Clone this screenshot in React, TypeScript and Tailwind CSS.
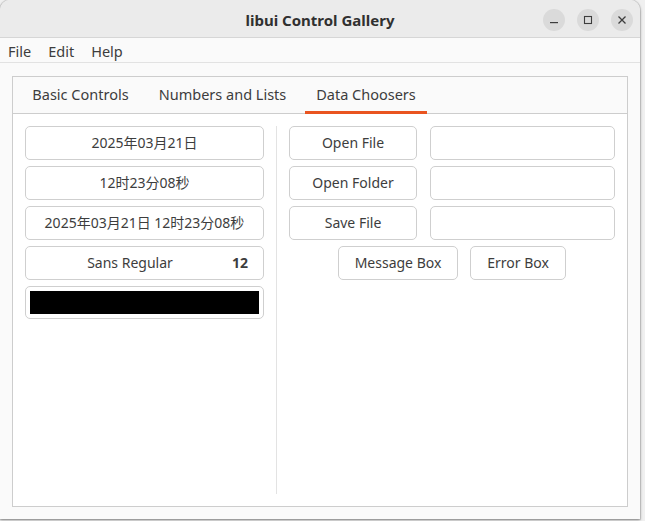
import React from "react";

const font = { fontFamily: '"Noto Sans", "Noto Sans CJK SC", sans-serif' };

function Btn({ children, className = "" }: { children: React.ReactNode; className?: string }) {
  return (
    <div
      className={
        "flex h-[34px] items-center justify-center rounded-[5px] border border-[#cfcfcf] bg-white pb-[1px] text-[14px] text-[#3d3d3d] " +
        className
      }
    >
      {children}
    </div>
  );
}

function Entry() {
  return <div className="h-[34px] flex-1 rounded-[5px] border border-[#cfcfcf] bg-white" />;
}

export default function App() {
  return (
    <div className="h-[521px] w-[645px] overflow-hidden bg-[#f0f0f0]" style={font}>
      <div className="flex h-[519px] w-[640px] flex-col overflow-hidden rounded-t-[10px] bg-[#fafafa] shadow-[0_1px_3px_rgba(0,0,0,0.45),0_0_0_1px_rgba(0,0,0,0.08)]">
        {/* Header bar */}
        <div className="relative flex h-[38px] shrink-0 items-center border-b border-[#d6d6d6] bg-[#ebebeb] pt-[4px]">
          <div className="flex-1 text-center text-[15px] font-bold text-[#303030]">libui Control Gallery</div>
          <div className="absolute right-[7px] top-[9px] flex gap-[12px]">
            <div className="flex h-[22px] w-[22px] items-center justify-center rounded-full bg-[#dadada]">
              <svg width="10" height="10" viewBox="0 0 10 10">
                <rect x="1" y="7" width="8" height="1.2" fill="#3d3d3d" />
              </svg>
            </div>
            <div className="flex h-[22px] w-[22px] items-center justify-center rounded-full bg-[#dadada]">
              <svg width="10" height="10" viewBox="0 0 10 10">
                <rect x="1.5" y="1.5" width="7" height="7" fill="none" stroke="#3d3d3d" strokeWidth="1.1" />
              </svg>
            </div>
            <div className="flex h-[22px] w-[22px] items-center justify-center rounded-full bg-[#dadada]">
              <svg width="10" height="10" viewBox="0 0 10 10">
                <path d="M1.5 1.5 L8.5 8.5 M8.5 1.5 L1.5 8.5" stroke="#3d3d3d" strokeWidth="1.3" />
              </svg>
            </div>
          </div>
        </div>
        {/* Menu bar */}
        <div className="flex h-[25px] shrink-0 items-center border-b border-[#e2e2e2] bg-[#fafafa] pt-[3px] text-[14.5px] text-[#3d3d3d]">
          <span className="ml-[8px]">File</span>
          <span className="ml-[17px]">Edit</span>
          <span className="ml-[17px]">Help</span>
        </div>
        {/* Content */}
        <div className="flex flex-1 flex-col px-[12px] pb-[12px] pt-[13px]">
          <div className="flex flex-1 flex-col border border-[#cdcdcd]">
            <div className="flex h-[37px] shrink-0 items-stretch border-b border-[#cdcdcd] bg-[#fafafa] pl-[8px] text-[14.5px] text-[#3d3d3d]">
              <div className="flex w-[119px] items-center justify-center">Basic Controls</div>
              <div className="ml-[8px] flex w-[149px] items-center justify-center">Numbers and Lists</div>
              <div className="mb-[-1px] ml-[8px] flex w-[122px] items-center justify-center border-b-[3px] border-[#e95420] pt-[2px]">
                Data Choosers
              </div>
            </div>
            <div className="flex flex-1 bg-white p-[12px]">
              {/* left column */}
              <div className="flex w-[239px] flex-col gap-[6px]">
                <Btn>2025年03月21日</Btn>
                <Btn>12时23分08秒</Btn>
                <Btn>2025年03月21日 12时23分08秒</Btn>
                <Btn className="justify-start pl-[16px] pr-[15px]">
                  <span className="flex-1 text-center">Sans Regular</span>
                  <span className="ml-[14px] font-bold">12</span>
                </Btn>
                <div className="flex h-[33px] items-stretch rounded-[5px] border border-[#cfcfcf] bg-white p-[4px]">
                  <div className="flex-1 bg-black" />
                </div>
              </div>
              <div className="mx-[12px] w-px bg-[#e3e3e3]" />
              {/* right column */}
              <div className="flex flex-1 flex-col gap-[6px]">
                <div className="flex gap-[13px]">
                  <Btn className="w-[128px]">Open File</Btn>
                  <Entry />
                </div>
                <div className="flex gap-[13px]">
                  <Btn className="w-[128px]">Open Folder</Btn>
                  <Entry />
                </div>
                <div className="flex gap-[13px]">
                  <Btn className="w-[128px]">Save File</Btn>
                  <Entry />
                </div>
                <div className="flex justify-center gap-[12px]">
                  <Btn className="w-[120px]">Message Box</Btn>
                  <Btn className="w-[96px]">Error Box</Btn>
                </div>
              </div>
            </div>
          </div>
        </div>
      </div>
    </div>
  );
}
